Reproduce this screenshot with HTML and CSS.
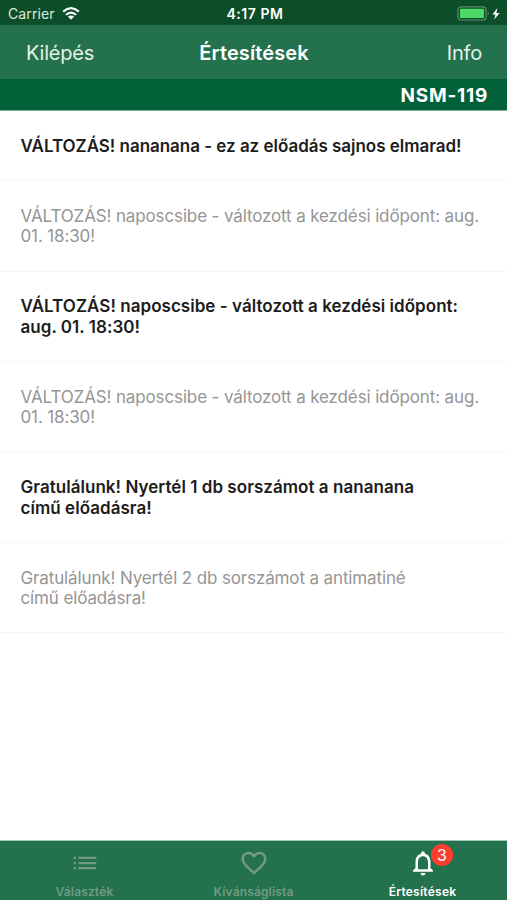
FILE: index.html
```html
<!DOCTYPE html>
<html lang="hu">
<head>
<meta charset="utf-8">
<title>Értesítések</title>
<link rel="stylesheet" href="styles.css">
</head>
<body>
<div class="app">
  <div class="status">
    <div class="status-left"><span class="carrier">Carrier</span>
      <svg class="wifi" viewBox="0 0 18 13" width="18" height="13"><g fill="none" stroke="#fff" stroke-width="2.2"><path d="M1.2 4.6Q9-2.2 16.8 4.6"/><path d="M4 7.8Q9 3.3 14 7.8"/></g><path d="M5.9 9.5Q9 7.3 12.1 9.5L9 12.8Z" fill="#fff"/></svg>
    </div>
    <span class="time">4:17 PM</span>
    <div class="status-right">
      <svg viewBox="0 0 46 16" width="46" height="16"><rect x="2" y=".8" width="28" height="13.2" rx="3" fill="none" stroke="#5f8d6c" stroke-width="1.2"/><rect x="4" y="2.8" width="24" height="9.2" rx="1" fill="#4cd964"/><path d="M31.6 5.3q2.6 2.1 0 4.2z" fill="#5f8d6c"/><path d="M41.4 1.9 36.4 8.5h3l-1.1 5L43.6 6.9h-3.2z" fill="#fff"/></svg>
    </div>
  </div>
  <header class="nav">
    <span class="exit">Kilépés</span><h1>Értesítések</h1><span class="info">Info</span>
  </header>
  <div class="code"><span>NSM-119</span></div>
  <main class="list">
    <p class="row single unread"><span>VÁLTOZÁS! nananana - ez az előadás sajnos elmarad!</span></p>
    <p class="row"><span>VÁLTOZÁS! naposcsibe - változott a kezdési időpont: aug.<br>01. 18:30!</span></p>
    <p class="row unread"><span>VÁLTOZÁS! naposcsibe - változott a kezdési időpont:<br>aug. 01. 18:30!</span></p>
    <p class="row"><span>VÁLTOZÁS! naposcsibe - változott a kezdési időpont: aug.<br>01. 18:30!</span></p>
    <p class="row unread"><span>Gratulálunk! Nyertél 1 db sorszámot a nananana<br>című előadásra!</span></p>
    <p class="row"><span>Gratulálunk! Nyertél 2 db sorszámot a antimatiné<br>című előadásra!</span></p>
  </main>
  <nav class="tabs">
    <div class="tab">
      <svg viewBox="0 0 24 24" width="30" height="30" fill="currentColor"><path d="M3 7h1.8v1.8H3zM3 11.1h1.8v1.8H3zM3 15.2h1.8V17H3zM6.8 7H21v1.8H6.8zM6.8 11.1H21v1.8H6.8zM6.8 15.2H21V17H6.8z"/></svg>
      <span>Választék</span>
    </div>
    <div class="tab">
      <svg viewBox="0 0 24 24" width="30" height="30" fill="currentColor"><path d="M16.5 3c-1.74 0-3.41.81-4.5 2.09C10.91 3.81 9.24 3 7.5 3 4.42 3 2 5.42 2 8.5c0 3.78 3.4 6.86 8.55 11.54L12 21.35l1.45-1.32C18.6 15.36 22 12.28 22 8.5 22 5.42 19.58 3 16.5 3zm-4.4 15.55-.1.1-.1-.1C7.14 14.24 4 11.39 4 8.5 4 6.5 5.5 5 7.5 5c1.54 0 3.04.99 3.57 2.36h1.87C13.46 5.99 14.96 5 16.5 5c2 0 3.5 1.5 3.5 3.5 0 2.89-3.14 5.74-7.9 10.05z"/></svg>
      <span>Kívánságlista</span>
    </div>
    <div class="tab active">
      <svg viewBox="0 0 24 24" width="30" height="30" fill="currentColor"><path d="M12 22c1.1 0 2-.9 2-2h-4c0 1.1.9 2 2 2zm6-6v-5c0-3.07-1.63-5.64-4.5-6.32V4c0-.83-.67-1.5-1.5-1.5s-1.5.67-1.5 1.5v.68C7.64 5.36 6 7.92 6 11v5l-2 2v1h16v-1l-2-2zm-2 1H8v-6c0-2.48 1.51-4.5 4-4.5s4 2.02 4 4.5v6z"/></svg>
      <b class="badge">3</b>
      <span>Értesítések</span>
    </div>
  </nav>
</div>
</body>
</html>
```
FILE: styles.css
```css
* { box-sizing: border-box; }
body { margin: 0; background: #fff; font-family: Inter, "Liberation Sans", sans-serif; }
.app { width: 507px; height: 900px; display: flex; flex-direction: column; overflow: hidden; }
.status { height: 25px; flex: none; padding: 2px 5px 0 8px; background: #0c4e2a; color: #fff; display: grid; grid-template-columns: 1fr auto 1fr; align-items: center; }
.status-left { display: flex; align-items: center; gap: 7px; }
.carrier { font-size: 14px; color: #dceade; letter-spacing: .1px; }
.time { font-size: 14px; font-weight: 600; letter-spacing: .55px; }
.status-right { display: flex; justify-content: flex-end; }
.nav { height: 54px; flex: none; padding: 1px 25px 0 26px; background: #23714d; color: #fff; display: grid; grid-template-columns: 1fr auto 1fr; align-items: center; }
.nav h1 { margin: 0; font-size: 20px; font-weight: 600; letter-spacing: .1px; }
.exit, .info { font-size: 20px; color: #e4f3e8; letter-spacing: -.2px; }
.info { text-align: right; }
.code { height: 32px; flex: none; padding: 1px 19px 0; background: #026039; border-bottom: 1px solid #7fae97; color: #fff; display: flex; align-items: center; justify-content: flex-end; font-size: 19px; font-weight: 650; letter-spacing: .75px; }
.list { flex: 1; }
.row { height: 90.4px; margin: 0; padding: 1px 20.5px 0; border-bottom: 1.4px solid #f5f5f5; display: flex; align-items: center; color: #959595; font-size: 17px; line-height: 20.4px; letter-spacing: -.13px; white-space: nowrap; }
.row.single { height: 70.2px; letter-spacing: -.03px; }
.unread { color: #1c1c1c; font-weight: 600; letter-spacing: .04px; }
.tabs { height: 60px; flex: none; background: #23714d; border-top: 1px solid #a5c6b6; display: grid; grid-template-columns: repeat(3, 1fr); color: #729a85; }
.tab { position: relative; display: flex; flex-direction: column; align-items: center; padding-top: 7px; font-size: 12px; font-weight: 600; line-height: 16px; letter-spacing: .15px; }
.tab span { margin-top: 6px; }
.active { color: #fff; letter-spacing: .25px; }
.badge { position: absolute; left: 93px; top: 3px; width: 22px; height: 22px; border-radius: 50%; background: #fc3d30; color: #fff; font-size: 16px; font-weight: 400; line-height: 22px; text-align: center; letter-spacing: 0; }
```
